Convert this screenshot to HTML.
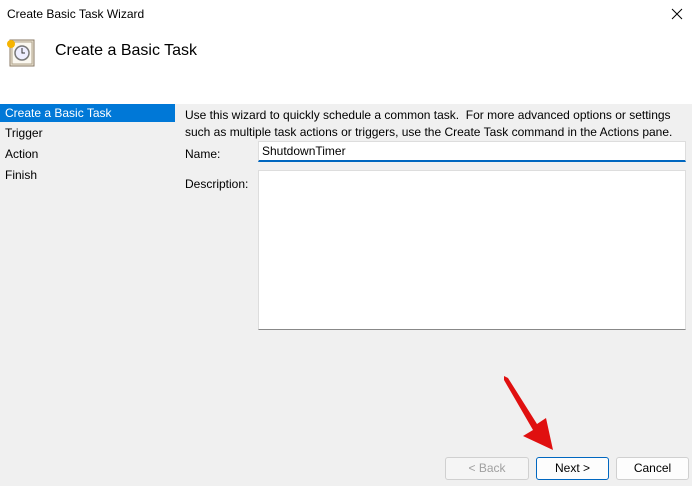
<!DOCTYPE html>
<html><head><style>
body{margin:0;width:692px;height:486px;background:#f0f0f0;font-family:"Segoe UI","Liberation Sans",sans-serif;font-size:12px;color:#000;position:relative;overflow:hidden}
.a{position:absolute}
.btn{position:absolute;top:457px;height:21px;border:1px solid #d0d0d0;border-radius:3px;background:#fdfdfd;text-align:center;line-height:21px;font-size:12px}
</style></head><body>
<div class="a" style="left:0;top:0;width:692px;height:104px;background:#fff"></div>
<div class="a" style="left:7px;top:7px;font-size:12px">Create Basic Task Wizard</div>
<svg class="a" style="left:671px;top:8px" width="12" height="12"><path d="M1 1L11 11M11 1L1 11" stroke="#000" stroke-width="1"/></svg>
<svg class="a" style="left:4px;top:36px" width="32" height="32" viewBox="0 0 32 32">
<rect x="6" y="4" width="24" height="26" fill="#efe8d8" stroke="#8a7a66"/>
<rect x="8" y="6" width="20" height="22" fill="#fbf8f0" stroke="#b0a48c"/>
<circle cx="18" cy="17" r="7" fill="#eef" stroke="#777" stroke-width="1.5"/>
<path d="M18 12v5h3" stroke="#333" fill="none"/>
<circle cx="7" cy="8" r="4" fill="#f6b400"/>
</svg>
<div class="a" style="left:55px;top:42px;font-size:16px">Create a Basic Task</div>
<div class="a" style="left:0;top:104px;width:175px;height:18px;background:#0078d7;color:#fff;line-height:18px;padding-left:5px;box-sizing:border-box">Create a Basic Task</div>
<div class="a" style="left:5px;top:126px">Trigger</div>
<div class="a" style="left:5px;top:147px">Action</div>
<div class="a" style="left:5px;top:168px">Finish</div>
<div class="a" style="left:185px;top:107px;line-height:17px;width:505px">Use this wizard to quickly schedule a common task.&nbsp; For more advanced options or settings such as multiple task actions or triggers, use the Create Task command in the Actions pane.</div>
<div class="a" style="left:185px;top:147px">Name:</div>
<div class="a" style="left:258px;top:141px;width:428px;height:21px;background:#fff;border:1px solid #ddd;border-bottom:2px solid #0067c0;box-sizing:border-box;padding-left:3px;line-height:19px">ShutdownTimer</div>
<div class="a" style="left:185px;top:177px">Description:</div>
<div class="a" style="left:258px;top:170px;width:428px;height:160px;background:#fff;border:1px solid #ddd;border-bottom:1px solid #888;box-sizing:border-box"></div>
<div class="btn" style="left:445px;width:82px;color:#a0a0a0;background:#f5f5f5">&lt; Back</div>
<div class="btn" style="left:536px;width:71px;border-color:#0067c0">Next &gt;</div>
<div class="btn" style="left:616px;width:71px">Cancel</div>
<svg class="a" style="left:0;top:0" width="692" height="486">
<path d="M504 376 L508 378 L537 424 L546 418 L553 450 L523 436 L533 430 L504 380Z" fill="#e01010"/>
</svg>
</body></html>
